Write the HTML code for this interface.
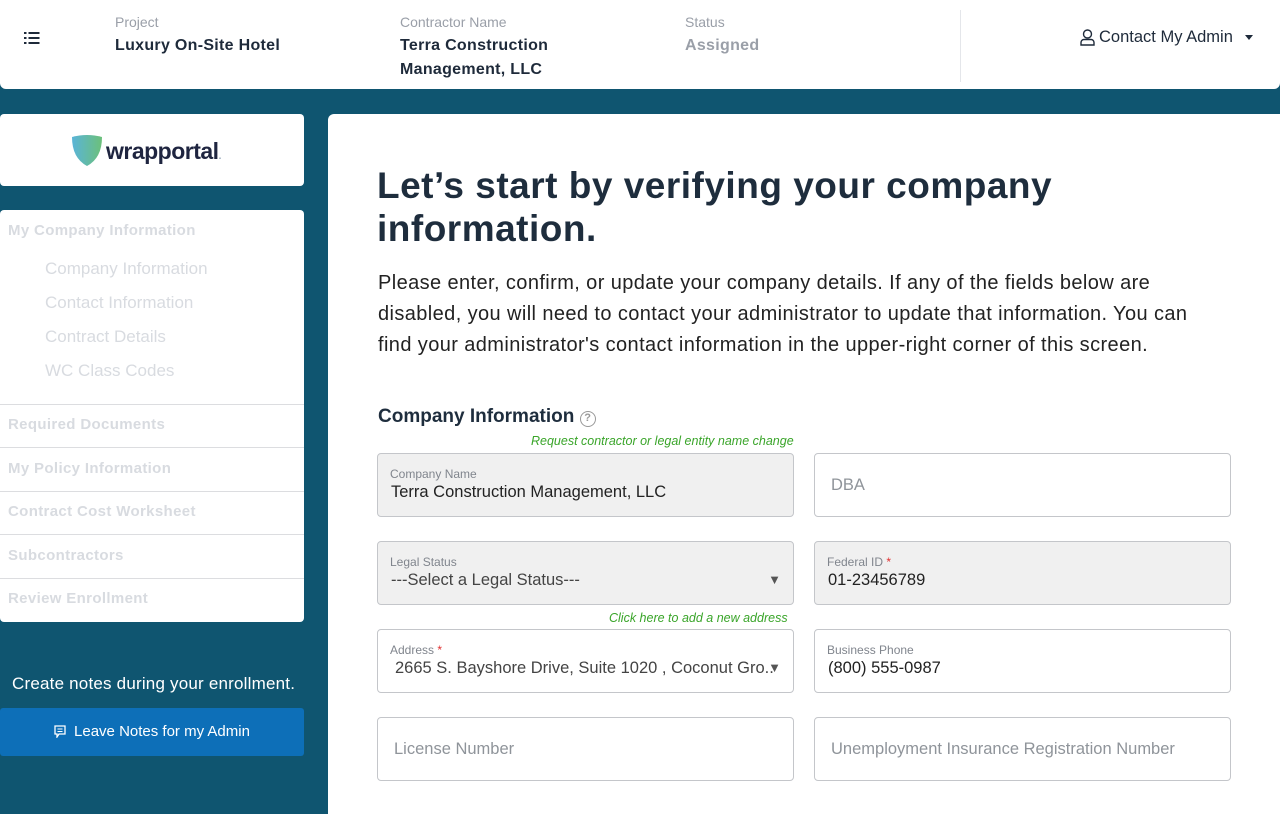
<!DOCTYPE html>
<html><head><style>
*{box-sizing:border-box;margin:0;padding:0}
body{width:1280px;height:804px;overflow:hidden;background:#0f5570;font-family:"Liberation Sans",sans-serif;position:relative}
.top{position:absolute;left:0;top:0;width:1280px;height:89px;background:#fff;border-radius:0 0 6px 6px}
.lbl{position:absolute;font-size:14px;color:#9a9fa8}
.val{position:absolute;font-size:16px;font-weight:bold;color:#1e2a3a;line-height:24px;letter-spacing:0.3px}
.card{position:absolute;background:#fff;border-radius:4px}
.nav{position:absolute;left:0;top:210px;width:304px;height:412px;background:#fff;border-radius:4px}
.ni{position:absolute;left:8px;font-size:15px;font-weight:bold;color:#d8dbe0;letter-spacing:0.35px}
.si{position:absolute;left:45px;font-size:17px;color:#d8dbe0}
.sep{position:absolute;left:0;width:304px;height:1px;background:#dcdde0}
.main{position:absolute;left:328px;top:114px;width:952px;height:700px;background:#fff;border-radius:6px 0 0 0}
h1{position:absolute;left:377px;top:164px;font-size:37px;line-height:43px;color:#1e2d3d;font-weight:bold;width:820px;letter-spacing:0.5px}
p.d{position:absolute;left:378px;top:268px;font-size:20px;line-height:31px;color:#222;width:840px;letter-spacing:0.4px}
.f{position:absolute;width:417px;height:64px;border:1px solid #c4c6ca;border-radius:4px;background:#fff}
.f.g{background:#f0f0f0}
.f .l{position:absolute;left:12px;top:13px;font-size:12px;color:#80858d}
.f .v{position:absolute;left:13px;top:29px;font-size:16.5px;color:#222}
.f .ph{position:absolute;left:16px;top:22px;font-size:16.5px;color:#8f949a}
.f .ar{position:absolute;right:12px;top:30px;font-size:13px;color:#555}
.req{color:#e03030}
.gl{position:absolute;font-size:12.5px;font-style:italic;color:#3aa52a}
</style></head><body>
<div class="top">
<svg style="position:absolute;left:24px;top:31px" width="16" height="14" viewBox="0 0 16 14"><g fill="#1e2a3a"><rect x="0" y="1" width="2.5" height="2"/><rect x="4.5" y="1" width="11" height="2"/><rect x="0" y="6" width="2.5" height="2"/><rect x="4.5" y="6" width="11" height="2"/><rect x="0" y="11" width="2.5" height="2"/><rect x="4.5" y="11" width="11" height="2"/></g></svg>
<div class="lbl" style="left:115px;top:14px">Project</div>
<div class="val" style="left:115px;top:34px">Luxury On-Site Hotel</div>
<div class="lbl" style="left:400px;top:14px">Contractor Name</div>
<div class="val" style="left:400px;top:34px">Terra Construction<br>Management, LLC</div>
<div class="lbl" style="left:685px;top:14px">Status</div>
<div class="val" style="left:685px;top:34px;color:#9a9fa8">Assigned</div>
<div style="position:absolute;left:960px;top:10px;width:1px;height:72px;background:#e4e6ea"></div>
<svg style="position:absolute;left:1080px;top:29px" width="15" height="17" viewBox="0 0 15 17"><circle cx="7.5" cy="5" r="4" fill="none" stroke="#1e2a3a" stroke-width="1.4"/><path d="M1 16v-2.5a3 3 0 0 1 3-3h7a3 3 0 0 1 3 3V16z" fill="none" stroke="#1e2a3a" stroke-width="1.4"/></svg>
<div style="position:absolute;left:1099px;top:28px;font-size:16.5px;color:#1e2a3a">Contact My Admin</div>
<div style="position:absolute;left:1245px;top:35px;border-left:4px solid transparent;border-right:4px solid transparent;border-top:5px solid #1e2a3a"></div>
</div>
<div class="card" style="left:0;top:114px;width:304px;height:72px">
<svg style="position:absolute;left:71px;top:20px" width="32" height="33" viewBox="0 0 32 33"><defs><linearGradient id="gg" x1="0" x2="1"><stop offset="0" stop-color="#5ab4d8"/><stop offset="1" stop-color="#6cc07a"/></linearGradient></defs><path d="M1 3Q16-1 31 3Q31 24 16 32Q1 24 1 3z" fill="url(#gg)"/></svg>
<div style="position:absolute;left:106px;top:24px;font-size:23px;font-weight:bold;color:#1f2540;letter-spacing:-0.5px">wrapportal<span style="color:#9ab;font-size:10px">.</span></div>
</div>
<div class="nav">
<div class="ni" style="top:12px">My Company Information</div>
<div class="si" style="top:49px">Company Information</div>
<div class="si" style="top:83px">Contact Information</div>
<div class="si" style="top:117px">Contract Details</div>
<div class="si" style="top:151px">WC Class Codes</div>
<div class="sep" style="top:194px"></div>
<div class="ni" style="top:206px">Required Documents</div>
<div class="sep" style="top:237px"></div>
<div class="ni" style="top:250px">My Policy Information</div>
<div class="sep" style="top:281px"></div>
<div class="ni" style="top:293px">Contract Cost Worksheet</div>
<div class="sep" style="top:324px"></div>
<div class="ni" style="top:337px">Subcontractors</div>
<div class="sep" style="top:368px"></div>
<div class="ni" style="top:380px">Review Enrollment</div>
</div>
<div style="position:absolute;left:12px;top:674px;font-size:17px;color:#fff;letter-spacing:0.2px">Create notes during your enrollment.</div>
<div style="position:absolute;left:0;top:708px;width:304px;height:48px;background:#0d6fb8;border-radius:3px;color:#fff;font-size:15px;text-align:center;line-height:48px">
<svg style="vertical-align:-2px;margin-right:8px" width="12" height="13" viewBox="0 0 12 13"><path d="M1 1h10v8H5l-2 3V9H1z" fill="none" stroke="#fff" stroke-width="1.3"/><path d="M3.5 4h5M3.5 6.5h5" stroke="#fff" stroke-width="1.1"/></svg>Leave Notes for my Admin</div>
<div class="main"></div>
<h1>Let’s start by verifying your company information.</h1>
<p class="d">Please enter, confirm, or update your company details. If any of the fields below are disabled, you will need to contact your administrator to update that information. You can find your administrator's contact information in the upper-right corner of this screen.</p>
<div style="position:absolute;left:378px;top:406px;font-size:19px;font-weight:bold;color:#1e2d3d">Company Information <span style="display:inline-block;width:16px;height:16px;border:1.5px solid #999;border-radius:50%;font-size:11px;color:#999;text-align:center;line-height:13px;vertical-align:1px">?</span></div>
<div class="gl" style="left:531px;top:434px">Request contractor or legal entity name change</div>
<div class="f g" style="left:377px;top:453px"><div class="l">Company Name</div><div class="v">Terra Construction Management, LLC</div></div>
<div class="f" style="left:814px;top:453px"><div class="ph">DBA</div></div>
<div class="f g" style="left:377px;top:541px"><div class="l">Legal Status</div><div class="v" style="color:#444">---Select a Legal Status---</div><div class="ar">▼</div></div>
<div class="f g" style="left:814px;top:541px"><div class="l">Federal ID <span class="req">*</span></div><div class="v">01-23456789</div></div>
<div class="gl" style="left:609px;top:611px">Click here to add a new address</div>
<div class="f" style="left:377px;top:629px"><div class="l">Address <span class="req">*</span></div><div class="v" style="left:17px;color:#444">2665 S. Bayshore Drive, Suite 1020 , Coconut Gro..</div><div class="ar">▼</div></div>
<div class="f" style="left:814px;top:629px"><div class="l">Business Phone</div><div class="v">(800) 555-0987</div></div>
<div class="f" style="left:377px;top:717px"><div class="ph">License Number</div></div>
<div class="f" style="left:814px;top:717px"><div class="ph">Unemployment Insurance Registration Number</div></div>
</body></html>
